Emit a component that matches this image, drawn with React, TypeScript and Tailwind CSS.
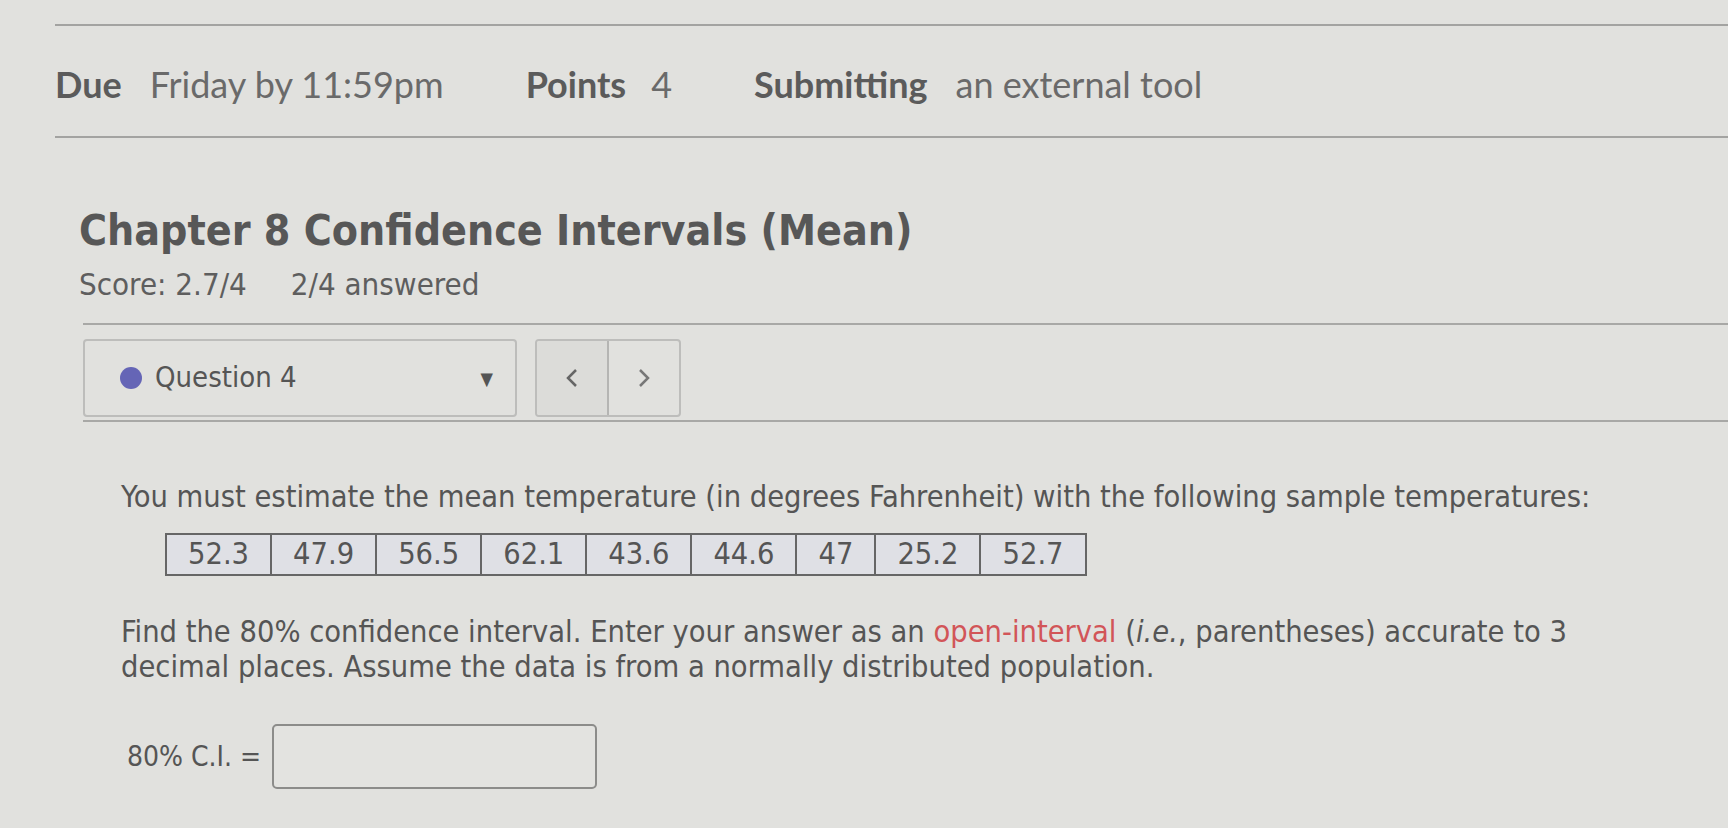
import React from 'react';

const temps = ['52.3', '47.9', '56.5', '62.1', '43.6', '44.6', '47', '25.2', '52.7'];

const quizFont = { fontFamily: '"DejaVu Sans Condensed", "DejaVu Sans", sans-serif' };

export default function App() {
  return (
    <div className="h-[828px] w-full overflow-hidden bg-[#e1e1de] text-[#5a5a5a]">
      {/* assignment details */}
      <div className="pl-[55px] pt-[24px]" style={{ fontFamily: 'Lato, sans-serif' }}>
        <div className="flex h-[114px] items-center gap-[82px] border-y-2 border-[#a3a3a1] pt-[6px] text-[36px] leading-none">
          <div className="flex gap-[28px]">
            <span className="font-bold text-[#5b5b5b]">Due</span>
            <span className="text-[#6a6a6a]">Friday by 11:59pm</span>
          </div>
          <div className="flex gap-[25px]">
            <span className="font-bold text-[#5b5b5b]">Points</span>
            <span className="text-[#6a6a6a]">4</span>
          </div>
          <div className="flex gap-[28px]">
            <span className="font-bold text-[#5b5b5b]">Submitting</span>
            <span className="text-[#6a6a6a]">an external tool</span>
          </div>
        </div>
      </div>

      <div style={quizFont}>
        <div className="pl-[79px] pt-[68px]">
          <h1 className="text-[42.5px] font-bold leading-[50px] text-[#575757]">Chapter 8 Confidence Intervals (Mean)</h1>
          <div className="mt-[11px] flex gap-[44px] text-[31px] leading-[34px] text-[#5e5e5e]">
            <span>Score: 2.7/4</span>
            <span>2/4 answered</span>
          </div>
        </div>

        <div className="ml-[83px] mt-[22px] border-y-2 border-[#a8a8a6] pb-[3px] pt-[14px]">
          <div className="flex gap-[18px]">
            <div className="flex h-[78px] w-[434px] items-center rounded-[4px] border-2 border-[#bdbdbb] pl-[35px] pr-[22px]">
              <span className="h-[22px] w-[22px] rounded-full bg-[#6565b6]" />
              <span className="ml-[13px] text-[29px] text-[#555]">Question 4</span>
              <span className="ml-auto text-[18px] text-[#555]">▼</span>
            </div>
            <div className="flex h-[78px] w-[146px] overflow-hidden rounded-[4px] border-2 border-[#bdbdbb]">
              <div className="flex w-[72px] items-center justify-center border-r-2 border-[#b5b5b3] bg-[#dcdcd9]">
                <svg width="16" height="24" viewBox="0 0 16 24" fill="none" stroke="#666" strokeWidth="2.5">
                  <path d="M12 4 L4 12 L12 20" />
                </svg>
              </div>
              <div className="flex flex-1 items-center justify-center">
                <svg width="16" height="24" viewBox="0 0 16 24" fill="none" stroke="#777" strokeWidth="2.5">
                  <path d="M4 4 L12 12 L4 20" />
                </svg>
              </div>
            </div>
          </div>
        </div>

        <div className="pl-[121px] pt-[55px] text-[30.5px] text-[#555]">
          <p className="leading-[40px]">
            You must estimate the mean temperature (in degrees Fahrenheit) with the following sample temperatures:
          </p>
          <table className="ml-[44px] mt-[16px] border-collapse border-2 border-[#666]">
            <tbody>
              <tr>
                {temps.map((t) => (
                  <td key={t} className="h-[41px] border-2 border-[#666] bg-[#dfe0e5] px-[21px] text-center leading-none">
                    {t}
                  </td>
                ))}
              </tr>
            </tbody>
          </table>

          <p className="mt-[38px] w-[1490px] leading-[35px]">
            Find the 80% confidence interval. Enter your answer as an{' '}
            <span className="text-[#d25558]">open-interval</span> (<i>i.e.</i>, parentheses) accurate to 3 decimal
            places. Assume the data is from a normally distributed population.
          </p>

          <div className="mt-[40px] flex items-center gap-[11px]">
            <span className="ml-[6px] text-[28px]">80% C.I. =</span>
            <div className="h-[65px] w-[325px] rounded-[5px] border-2 border-[#8c8c8a] bg-[#e3e3e0]" />
          </div>
        </div>
      </div>
    </div>
  );
}
